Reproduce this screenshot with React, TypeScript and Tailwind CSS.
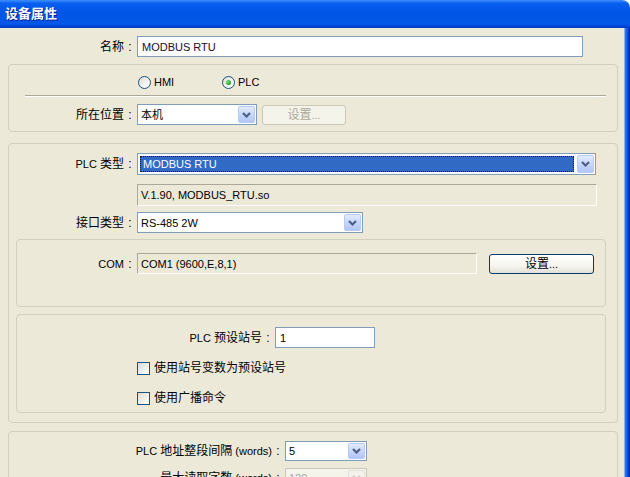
import type { ReactNode } from 'react';

// 12px for the CJK glyphs, the Latin text stays at 11px
function Zh({ children }: { children: ReactNode }) {
  return <span className="text-[12px]">{children}</span>;
}

// label colon, centred in a full-width cell
function Colon() {
  return <span className="inline-block w-[12px] text-center text-[12px]">:</span>;
}

function Chevron({ disabled }: { disabled?: boolean }) {
  return (
    <svg width="9" height="6" viewBox="0 0 9 6">
      <path
        d="M1 1 L4.5 4.5 L8 1"
        fill="none"
        stroke={disabled ? '#c9c7ba' : '#4d6185'}
        strokeWidth="2.2"
      />
    </svg>
  );
}

function DropButton({ disabled }: { disabled?: boolean }) {
  return (
    <div
      className={
        disabled
          ? 'm-[1px] flex w-[17px] shrink-0 items-center justify-center rounded-[2px] border border-[#e3e2d8] bg-[#f3f2ec]'
          : 'm-[1px] flex w-[17px] shrink-0 items-center justify-center rounded-[2px] border border-[#b9cbf3] bg-[linear-gradient(180deg,#e2ebfe_0%,#c6d7fc_50%,#b1c6f6_100%)]'
      }
    >
      <Chevron disabled={disabled} />
    </div>
  );
}

function Select({
  className,
  value,
  focused,
  disabled,
}: {
  className: string;
  value: string;
  focused?: boolean;
  disabled?: boolean;
}) {
  return (
    <div
      className={`flex shrink-0 border ${disabled ? 'border-[#c9c7ba] bg-[#f5f4ea] text-[#aca899]' : 'border-[#7f9db9] bg-white'} ${className}`}
    >
      {focused ? (
        <div className="m-[2px] flex flex-1 items-center border border-dotted border-[#1a1a1a] bg-[#316ac5] pl-[2px] text-white">
          {value}
        </div>
      ) : (
        <div className="flex flex-1 items-center pl-[3px]">{value}</div>
      )}
      <DropButton disabled={disabled} />
    </div>
  );
}

function Label({ className, children }: { className: string; children: ReactNode }) {
  return <div className={`shrink-0 pr-[1px] text-right ${className}`}>{children}</div>;
}

function ReadOnly({ className, value }: { className: string; value: string }) {
  return (
    <div
      className={`flex shrink-0 items-center border border-t-[#aca899] border-l-[#aca899] border-b-white border-r-white pl-[3px] ${className}`}
    >
      {value}
    </div>
  );
}

function Radio({ checked, label }: { checked?: boolean; label: string }) {
  return (
    <div className="flex items-center gap-[3px]">
      <div className="flex h-[13px] w-[13px] items-center justify-center rounded-full border border-[#1c5180] bg-[linear-gradient(135deg,#dcdcd5_0%,#f4f4f0_60%,#ffffff_100%)]">
        {checked && (
          <div className="h-[5px] w-[5px] rounded-full bg-[radial-gradient(circle_at_35%_35%,#6fe36f_0%,#21a121_70%)]" />
        )}
      </div>
      <span>{label}</span>
    </div>
  );
}

function Checkbox({ label }: { label: string }) {
  return (
    <div className="flex items-center gap-[4px]">
      <div className="h-[13px] w-[13px] border border-[#1c5180] bg-[linear-gradient(135deg,#dcdcd5_0%,#f0f0ea_55%,#ffffff_100%)]" />
      <Zh>{label}</Zh>
    </div>
  );
}

function Group({ className, children }: { className: string; children: ReactNode }) {
  return (
    <div className={`flex shrink-0 flex-col rounded-[4px] border border-[#d0d0bf] ${className}`}>{children}</div>
  );
}

export default function App() {
  return (
    <div className="flex h-[477px] w-[630px] flex-col overflow-hidden font-['Liberation_Sans','Noto_Sans_CJK_SC',sans-serif] text-[11px] leading-[14px] text-black">
      {/* caption bar */}
      <div className="flex h-[28px] shrink-0 items-center rounded-tr-[8px] bg-[linear-gradient(180deg,#3d8ffc_0%,#0a5ff0_12%,#0055e6_45%,#0358e8_85%,#003bc4_100%)] pl-[5px]">
        <span className="text-[13px] font-bold text-white [text-shadow:1px_1px_0_#0a1a8a]">设备属性</span>
      </div>

      <div className="flex min-h-0 flex-1">
        <div className="flex flex-1 flex-col overflow-hidden bg-[#ece9d8] pt-[8px]">
          <div className="flex h-[21px] shrink-0 items-center">
            <Label className="w-[137px]">
              <Zh>名称</Zh>
              <Colon />
            </Label>
            <div className="flex h-[21px] w-[446px] items-center border border-[#7f9db9] bg-white pl-[4px] text-[#1a0a2a]">
              MODBUS RTU
            </div>
          </div>

          <Group className="ml-[8px] mt-[7px] h-[68px] w-[610px]">
            <div className="mt-[10px] flex pl-[129px]">
              <div className="w-[84px]">
                <Radio label="HMI" />
              </div>
              <Radio checked label="PLC" />
            </div>
            <div className="ml-[16px] mt-[6px] h-[2px] w-[581px] border-t border-b border-t-[#aca899] border-b-white" />
            <div className="mt-[7px] flex items-center">
              <Label className="w-[128px]">
                <Zh>所在位置</Zh>
                <Colon />
              </Label>
              <Select className="h-[21px] w-[120px]" value="本机" />
              <div className="ml-[5px] flex h-[20px] w-[84px] items-center justify-center rounded-[3px] border border-[#c9c7ba] bg-[#f5f4ea] text-[#aca899]">
                <Zh>设置</Zh>...
              </div>
            </div>
          </Group>

          <Group className="ml-[8px] mt-[11px] h-[280px] w-[610px]">
            <div className="mt-[9px] flex items-center">
              <Label className="w-[128px]">
                PLC <Zh>类型</Zh>
                <Colon />
              </Label>
              <Select className="h-[22px] w-[459px]" value="MODBUS RTU" focused />
            </div>
            <ReadOnly className="ml-[128px] mt-[9px] h-[22px] w-[460px]" value="V.1.90, MODBUS_RTU.so" />
            <div className="mt-[6px] flex items-center">
              <Label className="w-[128px]">
                <Zh>接口类型</Zh>
                <Colon />
              </Label>
              <Select className="h-[21px] w-[226px]" value="RS-485 2W" />
            </div>

            <Group className="ml-[7px] mt-[6px] h-[68px] w-[590px]">
              <div className="mt-[13px] flex items-center">
                <Label className="w-[120px]">
                  COM
                  <Colon />
                </Label>
                <ReadOnly className="h-[21px] w-[340px]" value="COM1 (9600,E,8,1)" />
                <div className="ml-[12px] flex h-[20px] w-[105px] items-center justify-center rounded-[3px] border border-[#003c74] bg-[linear-gradient(180deg,#ffffff_0%,#f6f5ef_60%,#e3e1d6_100%)]">
                  <Zh>设置</Zh>...
                </div>
              </div>
            </Group>

            <Group className="ml-[7px] mt-[7px] h-[99px] w-[590px]">
              <div className="mt-[12px] flex items-center">
                <Label className="w-[258px]">
                  PLC <Zh>预设站号</Zh>
                  <Colon />
                </Label>
                <div className="flex h-[21px] w-[100px] items-center border border-[#7f9db9] bg-white pl-[4px]">1</div>
              </div>
              <div className="ml-[120px] mt-[13px]">
                <Checkbox label="使用站号变数为预设站号" />
              </div>
              <div className="ml-[120px] mt-[16px]">
                <Checkbox label="使用广播命令" />
              </div>
            </Group>
          </Group>

          <Group className="ml-[8px] mt-[8px] h-[80px] w-[610px]">
            <div className="mt-[9px] flex items-center">
              <Label className="w-[276px]">
                PLC <Zh>地址整段间隔</Zh> (words)
                <Colon />
              </Label>
              <Select className="h-[20px] w-[82px]" value="5" />
            </div>
            <div className="mt-[7px] flex items-center">
              <Label className="w-[276px]">
                <Zh>最大读取字数</Zh> (words)
                <Colon />
              </Label>
              <Select className="h-[20px] w-[82px]" value="120" disabled />
            </div>
          </Group>
        </div>

        {/* right window frame */}
        <div className="w-[6px] shrink-0 bg-[linear-gradient(90deg,#c8d3ee_0%,#2f7bf5_20%,#0d52dc_60%,#001a9e_100%)]" />
      </div>
    </div>
  );
}
